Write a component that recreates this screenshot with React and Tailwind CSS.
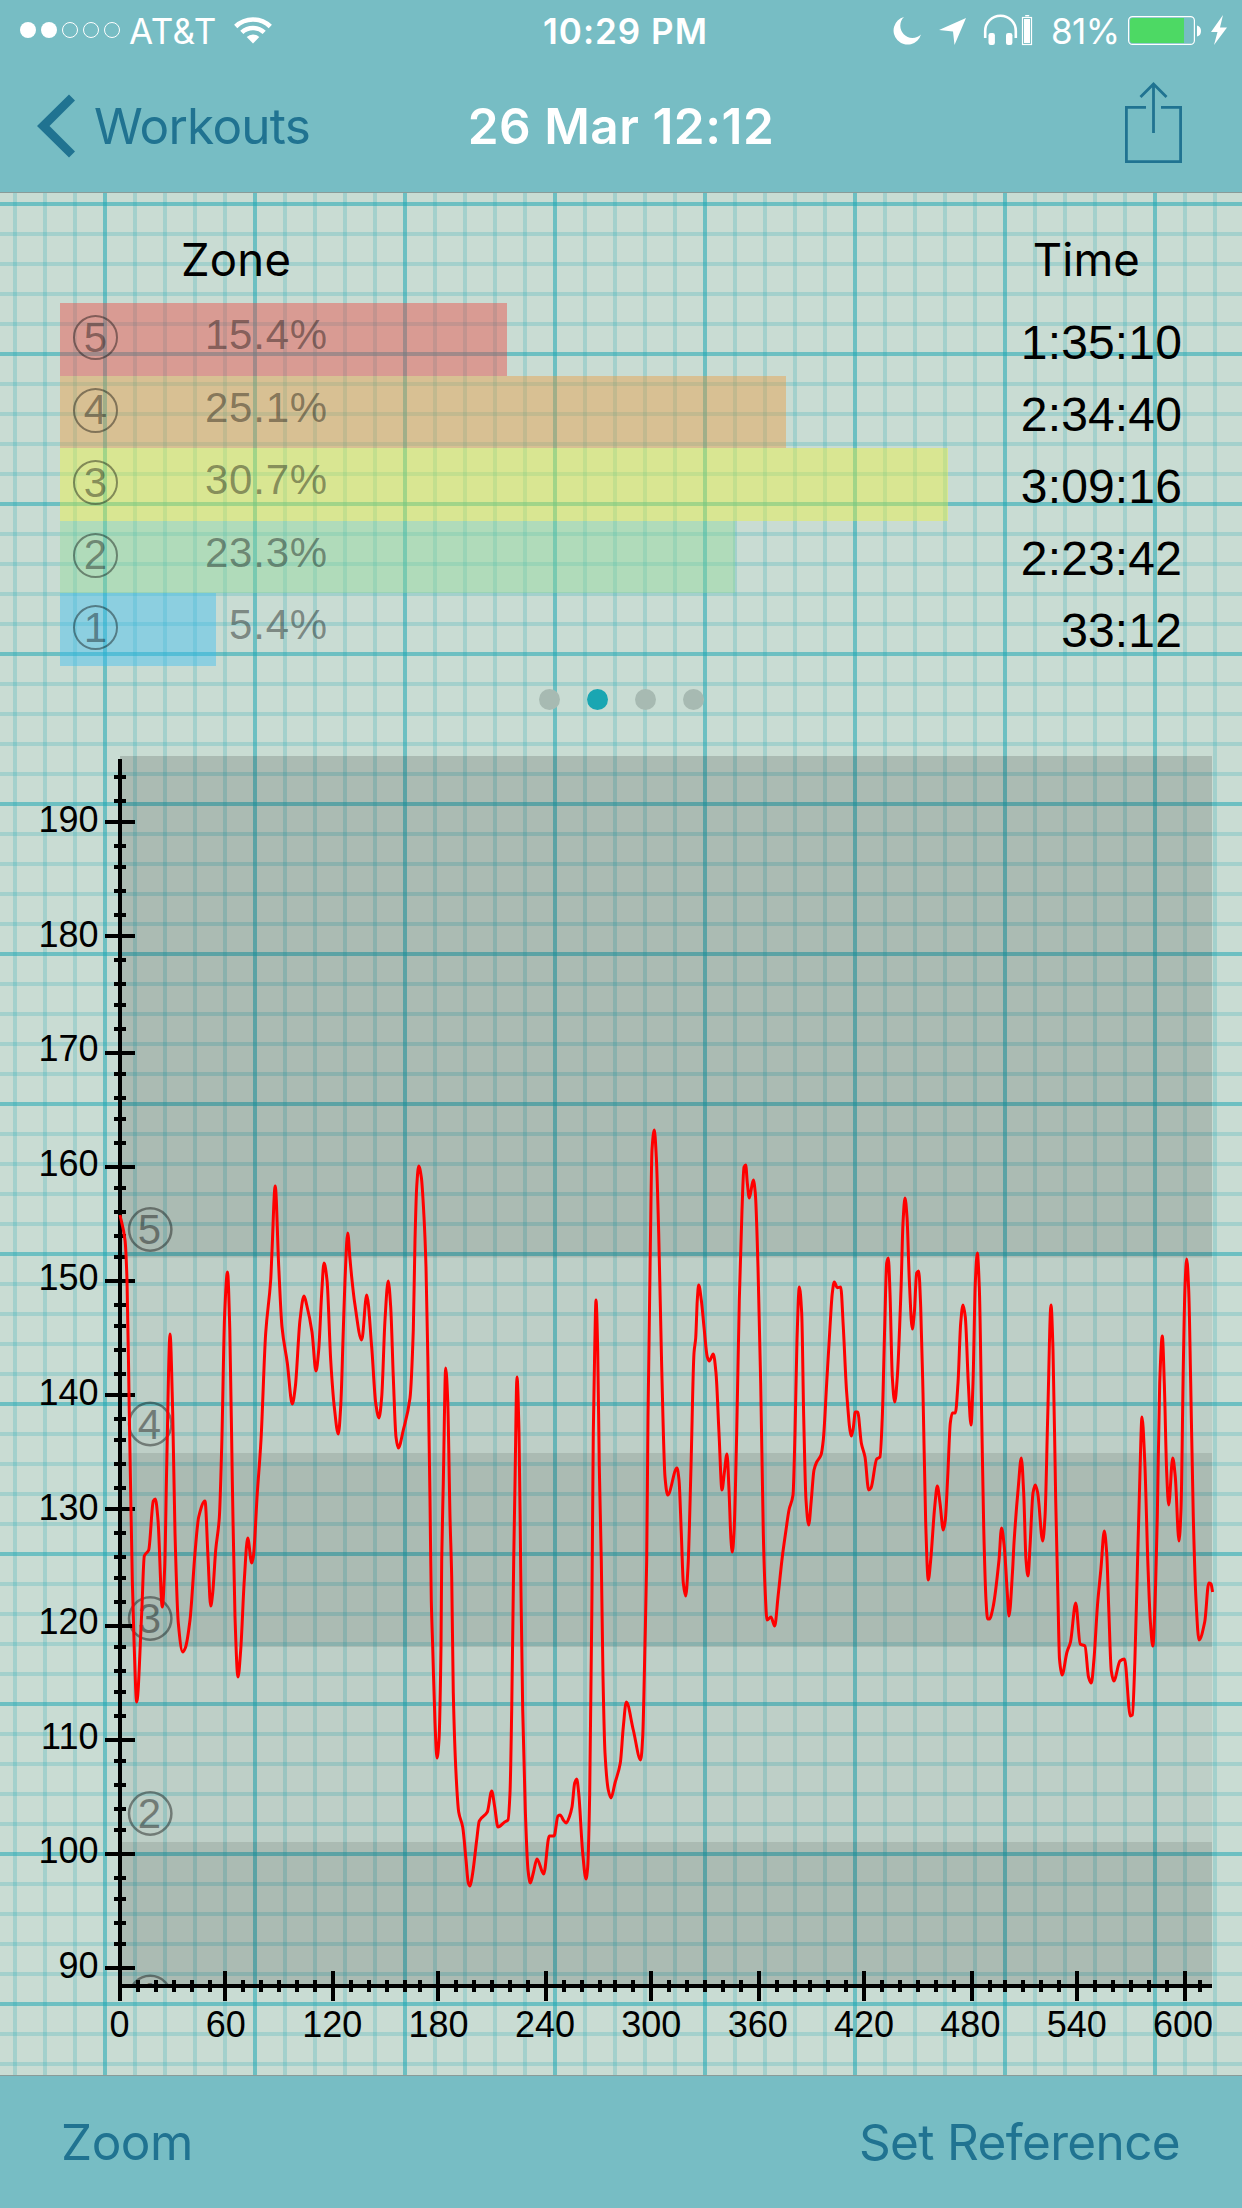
import React from 'react';

const zones = [
    { id: 5, percent: '15.4%', width: 'w-[446.5px]', color: 'bg-[rgba(243,57,53,0.4)]', time: '1:35:10' },
    { id: 4, percent: '25.1%', width: 'w-[726px]', color: 'bg-[rgba(241,150,53,0.4)]', time: '2:34:40' },
    { id: 3, percent: '30.7%', width: 'w-[888px]', color: 'bg-[rgba(243,245,49,0.4)]', time: '3:09:16' },
    { id: 2, percent: '23.3%', width: 'w-[675px]', color: 'bg-[rgba(141,218,151,0.4)]', time: '2:23:42' },
    { id: 1, percent: '5.4%', width: 'w-[156px]', color: 'bg-[rgba(51,187,246,0.4)]', time: '33:12' },
];

// heart rate trace, chart coordinates
const trace = [
    [120, 1215], [125, 1240], [127, 1280], [129.3, 1413], [132.3, 1580], [134, 1640], [136.7, 1702], [141.7, 1613],
    [144.3, 1556], [148.7, 1550], [153.3, 1501], [155.3, 1499], [158, 1520], [162.3, 1607], [164.7, 1567], [166.7, 1467],
    [170, 1334], [172.7, 1413], [175, 1533], [178.3, 1623], [182.7, 1652], [185.3, 1648], [190, 1620], [195, 1553],
    [198.7, 1517], [205, 1501], [208, 1557], [210.7, 1606], [212.7, 1593], [215.7, 1550], [219.3, 1518], [221.7, 1447],
    [224.7, 1313], [227.5, 1272], [229.8, 1330], [232.3, 1480], [235, 1617], [238, 1677], [240.7, 1650], [244.3, 1580],
    [247.7, 1538], [251.7, 1563], [253.3, 1557], [257.3, 1493], [261, 1440], [265.7, 1333], [270.7, 1280], [272, 1251],
    [275.2, 1186], [278.7, 1266], [282, 1327], [287.3, 1363], [292.3, 1404], [295.3, 1387], [300, 1320], [304, 1296],
    [306.7, 1305], [312, 1332], [316, 1371], [318.7, 1350], [321.7, 1293], [324, 1263], [327, 1280], [330.7, 1360],
    [334.3, 1407], [338.3, 1434], [340.7, 1407], [343.3, 1330], [345, 1280], [347.7, 1233], [350, 1259], [352, 1280],
    [354.7, 1303], [361.7, 1340], [366.7, 1295], [371.7, 1347], [375.7, 1403], [379, 1418], [381.7, 1397], [385, 1320],
    [388.2, 1281], [390.7, 1307], [393.3, 1377], [396, 1437], [398.3, 1448], [403.3, 1430], [410, 1398], [413.3, 1330],
    [415, 1240], [416.7, 1187], [418.7, 1166], [421.3, 1177], [424, 1217], [426, 1267], [428, 1367], [430, 1500],
    [431.3, 1600], [432.7, 1647], [435, 1723], [437, 1758], [439, 1740], [441, 1647], [441.7, 1560], [443.3, 1483],
    [445.7, 1368], [447.7, 1400], [450, 1517], [451.7, 1577], [453.3, 1693], [456, 1773], [458.7, 1812], [462.7, 1827],
    [466, 1860], [468.3, 1883], [470, 1886], [472.7, 1873], [476.7, 1840], [479.3, 1821], [487.3, 1812], [491.7, 1791],
    [494.7, 1807], [498, 1827], [504.7, 1822], [508, 1820], [510, 1793], [511.7, 1710], [513.7, 1560], [515, 1483],
    [517, 1377], [519, 1433], [520.7, 1567], [522.7, 1710], [525.3, 1810], [528, 1870], [530.3, 1883], [533.3, 1873],
    [537, 1859], [543.7, 1874], [549.3, 1836], [554, 1836], [558, 1816], [560.3, 1815], [563.3, 1820], [566.3, 1823],
    [569.3, 1817], [572, 1807], [574.7, 1783], [576.7, 1779], [578.7, 1793], [582.7, 1853], [586, 1879], [587.7, 1867],
    [589.7, 1793], [592, 1593], [593.3, 1433], [594.7, 1350], [596, 1300], [597.7, 1350], [599.3, 1467], [601.3, 1560],
    [603, 1677], [605, 1753], [608.3, 1790], [611, 1798], [615, 1783], [620.3, 1763], [623.3, 1727], [626.3, 1702],
    [633.3, 1730], [640.7, 1760], [642.7, 1737], [645, 1643], [646.7, 1560], [648, 1417], [650.3, 1250], [652, 1150],
    [654.3, 1130], [656.3, 1157], [658.7, 1233], [661.7, 1367], [665, 1477], [667.7, 1495], [677, 1468], [679, 1480],
    [681.3, 1533], [683.3, 1583], [685.7, 1596], [688, 1567], [691, 1467], [694, 1353], [695.7, 1338], [697.3, 1300],
    [698.7, 1285], [701.3, 1300], [704, 1327], [707.3, 1357], [709.3, 1361], [713.3, 1354], [716, 1373], [719, 1433],
    [722, 1490], [724.3, 1473], [727, 1454], [729, 1490], [731, 1540], [732.3, 1552], [734, 1533], [736.7, 1433],
    [739.3, 1300], [742, 1210], [744, 1167], [745.7, 1165], [747.3, 1183], [749.3, 1198], [753.3, 1180], [755.3, 1193],
    [758, 1267], [760.7, 1383], [763.3, 1533], [765, 1587], [767, 1620], [771, 1617], [774.7, 1626], [778, 1597],
    [782.3, 1557], [786, 1530], [789, 1510], [793, 1495], [795, 1433], [797, 1340], [799.3, 1287], [801.7, 1313],
    [803.7, 1417], [806, 1500], [808.7, 1525], [811.3, 1500], [814, 1470], [816.7, 1462], [821, 1455], [823.3, 1440],
    [826.7, 1383], [830, 1327], [832.3, 1293], [834.3, 1282], [837.3, 1287.7], [840.7, 1287], [843.3, 1327], [846.7, 1393],
    [851.3, 1436], [853.3, 1428], [855.3, 1412], [857.7, 1412], [861.3, 1443], [865, 1457], [868.7, 1490], [871, 1488],
    [876.7, 1459], [880, 1457], [882.3, 1417], [884.7, 1327], [886.7, 1263], [888.3, 1258], [890, 1293], [892.3, 1377],
    [894.7, 1402], [897.3, 1377], [901, 1290], [903, 1223], [905, 1198], [907, 1217], [909.3, 1280], [912.3, 1329],
    [914.3, 1313], [916.7, 1273], [918.7, 1271], [920.7, 1307], [923, 1393], [925.7, 1523], [928.3, 1580], [930.7, 1560],
    [934.7, 1507], [937.3, 1486], [940, 1503], [943.3, 1530], [945.3, 1520], [947.7, 1477], [950.3, 1423], [952.3, 1413],
    [955.3, 1413], [958, 1383], [960.7, 1323], [963, 1305], [965.3, 1317], [968.3, 1383], [971, 1425], [973, 1383],
    [975.3, 1283], [977.3, 1253], [979.3, 1287], [981.7, 1417], [983.7, 1527], [986, 1600], [987.6, 1619], [989.5, 1619],
    [993, 1607.5], [999, 1560], [1001.5, 1528], [1004.3, 1547], [1007.3, 1593], [1009, 1616], [1012.5, 1572], [1014, 1543],
    [1018.3, 1487], [1021.3, 1458], [1023.7, 1493], [1026, 1560], [1028, 1576], [1030, 1547], [1033, 1493], [1035.3, 1485],
    [1037.7, 1493], [1042.7, 1541], [1045, 1517], [1047.7, 1417], [1051, 1305], [1053, 1350], [1055.7, 1500], [1058, 1600],
    [1059.5, 1659], [1062, 1675], [1067, 1652], [1070.5, 1642], [1075.7, 1603], [1080.2, 1644], [1085, 1646], [1088.5, 1677],
    [1091.3, 1683], [1094, 1659], [1097.5, 1605], [1101, 1568], [1104.3, 1531], [1106.7, 1553], [1108.7, 1607], [1111.3, 1671],
    [1113.8, 1681], [1120, 1661], [1124.5, 1659], [1130.3, 1716], [1132.4, 1715], [1134.8, 1663], [1137.6, 1560], [1139.7, 1483],
    [1142, 1417], [1144.7, 1460], [1148, 1567], [1150.4, 1622], [1152.8, 1646], [1155.6, 1585], [1157.3, 1517], [1159.7, 1383],
    [1162.3, 1336], [1164.3, 1383], [1166.7, 1473], [1168.7, 1505], [1172.7, 1458], [1175.3, 1477], [1179, 1541], [1181, 1510],
    [1183.3, 1367], [1185, 1287], [1186.7, 1259], [1188.7, 1290], [1190.7, 1383], [1193.3, 1517], [1196, 1600], [1199, 1640],
    [1204.7, 1622], [1208.8, 1583], [1211, 1584], [1212.6, 1592],
];

// monotone cubic so the peaks never overshoot
const smoothPath = (pts) => {
    const n = pts.length;
    const slope = [];
    for (let i = 0; i < n - 1; i++) {
        slope.push((pts[i + 1][1] - pts[i][1]) / (pts[i + 1][0] - pts[i][0]));
    }
    const tangent = pts.map((_, i) => {
        if (i === 0) return slope[0];
        if (i === n - 1) return slope[n - 2];
        const a = slope[i - 1];
        const b = slope[i];
        return a * b <= 0 ? 0 : (2 * a * b) / (a + b);
    });
    let d = `M${pts[0][0]} ${pts[0][1]}`;
    for (let i = 0; i < n - 1; i++) {
        const [x0, y0] = pts[i];
        const [x1, y1] = pts[i + 1];
        const h = (x1 - x0) / 3;
        d += `C${(x0 + h).toFixed(2)} ${(y0 + tangent[i] * h).toFixed(2)} ${(x1 - h).toFixed(2)} ${(y1 - tangent[i + 1] * h).toFixed(2)} ${x1} ${y1}`;
    }
    return d;
};

// ticks sit on whole points, labels do not
const snap = (v) => Math.round(v / 3) * 3;
const bpmToY = (bpm) => 822.6 + (190 - bpm) * 11.457;
const minToX = (min) => 120 + min * 1.7727;

const bpmTicks = Array.from({ length: 53 }, (_, i) => 90 + i * 2);
const minTicks = Array.from({ length: 62 }, (_, i) => i * 10);

const bands = [
    { y: 756, h: 501.5, o: 0.15 },
    { y: 1257.5, h: 195.5, o: 0.055 },
    { y: 1453, h: 194, o: 0.15 },
    { y: 1647, h: 195, o: 0.055 },
    { y: 1842, h: 146, o: 0.15 },
];

const zoneMarks = [
    { id: 5, y: 1229.5 },
    { id: 4, y: 1424 },
    { id: 3, y: 1618.5 },
    { id: 2, y: 1813.5 },
    { id: 1, y: 1997 },
];

const StatusBar = () => (
    <div className="flex h-[60px] items-center pl-5 text-white">
        <div className="flex w-[523px] items-center">
            <div className="flex gap-[5px]">
                <span className="size-4 rounded-full bg-white" />
                <span className="size-4 rounded-full bg-white" />
                <span className="size-4 rounded-full border border-white" />
                <span className="size-4 rounded-full border border-white" />
                <span className="size-4 rounded-full border border-white" />
            </div>
            <span className="ml-[9px] w-[87px] whitespace-nowrap pt-[2px] text-[35px] leading-[60px] tracking-[0.5px]">AT&amp;T</span>
            <svg className="ml-[18px] h-[28px] w-[38px]" viewBox="0 0 38 28" fill="none" stroke="#fff">
                <path d="M1.7 10.5 A25 25 0 0 1 36.3 10.5" strokeWidth="4.6" />
                <path d="M7.8 16.4 A16.5 16.5 0 0 1 30.2 16.4" strokeWidth="4.6" />
                <path d="M12.7 21 A9 9 0 0 1 25.3 21 L19 27.5Z" fill="#fff" stroke="none" />
            </svg>
        </div>
        <span className="w-[350px] whitespace-nowrap pt-[2px] text-[35px] leading-[60px] font-semibold tracking-[1px]">10:29 PM</span>
        <svg className="h-[60px] w-[142px] shrink-0" viewBox="893 0 142 60" fill="#fff">
            <path d="M904 17 A14 14 0 1 0 921 34.5 A12 12 0 0 1 904 17Z" />
            <path d="M966 18 L954.5 45 L953 31.5 L939 30Z" />
            <path d="M985.2 38 V31 A15.3 15.3 0 0 1 1015.8 31 V38" fill="none" stroke="#fff" strokeWidth="2.6" />
            <rect x="988.5" y="33" width="6.4" height="12" rx="2.2" />
            <rect x="1006" y="33" width="6.4" height="12" rx="2.2" />
            <rect x="1025.2" y="15" width="4" height="1.4" />
            <rect x="1022.5" y="17.5" width="9" height="27" fill="none" stroke="#fff" strokeWidth="1.2" />
            <rect x="1024" y="19" width="6" height="24" />
        </svg>
        <span className="ml-[16px] w-[77px] whitespace-nowrap pt-[2px] text-[35px] leading-[60px] tracking-[-0.6px]">81%</span>
        <svg className="h-[60px] w-[102px] shrink-0" viewBox="1128 0 102 60" fill="#fff">
            <rect x="1128.6" y="16.6" width="65.8" height="27.8" rx="4" fill="none" stroke="#fff" strokeWidth="1.2" />
            <path d="M1184 18 V43 H1133 Q1130 43 1130 40 V21 Q1130 18 1133 18Z" fill="#4dd964" />
            <path d="M1197 25.5 Q1201 26.5 1201 31 Q1201 35.5 1197 36.5Z" />
            <path d="M1223 15 L1211 32 H1217.5 L1214 45 L1227 27.5 H1220Z" />
        </svg>
    </div>
);

const NavBar = () => (
    <div className="grid h-[132px] grid-cols-[1fr_auto_1fr] items-center text-[49.5px] leading-[132px]">
        <div className="flex items-center pl-[37px] text-[#207391]">
            <svg className="h-[64px] w-[38px]" viewBox="37 94.5 38 64" fill="#207391">
                <path d="M69 95 L75 101 L49.5 126.5 L75 152 L69 158 L37 126.5Z" />
            </svg>
            <span className="ml-[19px] tracking-[-0.75px]">Workouts</span>
        </div>
        <h1 className="font-semibold text-white tracking-[0.5px]">26 Mar 12:12</h1>
        <div className="flex justify-end pr-[59px]">
            <svg className="h-[132px] w-[60px]" viewBox="1123 60 60 132" fill="none" stroke="#207391" strokeWidth="2.8">
                <path d="M1146 107.4 H1126.4 V161.6 H1180.6 V107.4 H1161" />
                <path d="M1153.5 133 V84 M1140.5 97 L1153.5 84 L1166.5 97" />
            </svg>
        </div>
    </div>
);

const ZoneSummary = () => (
    <section>
        <div className="flex h-[110px] justify-between pt-[27px] pr-[102px] pl-[181px] text-[45.5px] leading-[80px]">
            <span className="tracking-[0.2px]">Zone</span>
            <span className="tracking-[0.1px]">Time</span>
        </div>
        <div className="flex h-[363px] justify-between pr-[60px] pl-[60px] font-['Liberation_Sans',Arial,sans-serif]">
            <div className="flex flex-col">
                {zones.map((zone) => (
                    <div key={zone.id} className="grid h-[72.6px]">
                        <div className={`col-start-1 row-start-1 h-[72.6px] ${zone.width} ${zone.color}`} />
                        <div className="col-start-1 row-start-1 flex items-start text-[42px] text-black/40">
                            <span className="mt-3 ml-[13px] flex size-[45px] items-center justify-center rounded-full border-[2.5px] border-black/40 leading-none">
                                {zone.id}
                            </span>
                            <span className="w-[210px] text-right leading-[63px] tracking-[0.8px]">{zone.percent}</span>
                        </div>
                    </div>
                ))}
            </div>
            <div className="flex flex-col pt-1 text-right text-[48px] leading-[72px] tracking-[0.15px]">
                {zones.map((zone) => (
                    <span key={zone.id}>{zone.time}</span>
                ))}
            </div>
        </div>
        <div className="flex h-[78px] justify-center gap-[27px] pt-[23px]">
            <span className="size-[21px] rounded-full bg-[#a7bab2]" />
            <span className="size-[21px] rounded-full bg-[#1aa6b2]" />
            <span className="size-[21px] rounded-full bg-[#a7bab2]" />
            <span className="size-[21px] rounded-full bg-[#a7bab2]" />
        </div>
    </section>
);

const HeartRateChart = () => (
    <svg
        className="block h-[1331px] w-[1242px] font-['Liberation_Sans',Arial,sans-serif]"
        viewBox="0 744 1242 1331"
    >
        <clipPath id="plot">
            <rect x="118" y="756" width="1096" height="1232" />
        </clipPath>
        {bands.map((band) => (
            <rect key={band.y} x="120" y={band.y} width="1092" height={band.h} fill="#000" fillOpacity={band.o} />
        ))}
        <g clipPath="url(#plot)" opacity="0.4" fontSize="42" textAnchor="middle">
            {zoneMarks.map((mark) => (
                <g key={mark.id}>
                    <circle cx="150.2" cy={mark.y} r="21.2" fill="none" stroke="#000" strokeWidth="2.5" />
                    <text x="149.5" y={mark.y + 14.6}>{mark.id}</text>
                </g>
            ))}
        </g>
        <g stroke="#000" strokeWidth="4">
            <path d="M120 759 V2001 M118 1986 H1212" />
            {bpmTicks.map((bpm) => {
                const half = bpm % 10 === 0 ? 15 : 6;
                return <path key={bpm} d={`M${120 - half} ${snap(bpmToY(bpm))} h${half * 2}`} />;
            })}
            {minTicks.slice(1).map((min) => {
                const half = min % 60 === 0 ? 15 : 6;
                return <path key={min} d={`M${snap(minToX(min))} ${1986 - half} v${half * 2}`} />;
            })}
        </g>
        <g fontSize="36" textAnchor="end">
            {bpmTicks.filter((bpm) => bpm % 10 === 0).map((bpm) => (
                <text key={bpm} x="98.5" y={bpmToY(bpm) + 9.6}>{bpm}</text>
            ))}
        </g>
        <g fontSize="36" textAnchor="middle">
            {minTicks.filter((min) => min % 60 === 0).map((min) => (
                <text key={min} x={minToX(min) - 0.5} y="2037">{min}</text>
            ))}
        </g>
        <path d={smoothPath(trace)} fill="none" stroke="#f00" strokeWidth="3" strokeLinejoin="round" />
    </svg>
);

const App = () => {
    return (
        <div className="flex h-[2208px] w-[1242px] flex-col overflow-hidden bg-[#c9dcd3] bg-[linear-gradient(to_right,rgba(26,166,179,0.4)_4px,transparent_4px),linear-gradient(to_bottom,rgba(26,166,179,0.4)_4px,transparent_4px),linear-gradient(to_right,rgba(26,166,179,0.21)_4px,transparent_4px),linear-gradient(to_bottom,rgba(26,166,179,0.21)_4px,transparent_4px)] [background-position:103px_202px,103px_202px,13px_22px,13px_22px] [background-size:150px_150px,150px_150px,30px_30px,30px_30px] font-[Inter,sans-serif] text-black">
            <header className="h-[193px] shrink-0 border-b border-[#8a9b98] bg-[#77bdc4]">
                <StatusBar />
                <NavBar />
            </header>
            <main className="h-[1882px] shrink-0">
                <ZoneSummary />
                <HeartRateChart />
            </main>
            <footer className="flex h-[133px] shrink-0 items-center justify-between border-t border-[#8a9b98] bg-[#77bdc4] pr-[62px] pl-[61px] text-[49.5px] text-[#207391]">
                <span className="tracking-[-0.5px]">Zoom</span>
                <span className="tracking-[-0.65px]">Set Reference</span>
            </footer>
        </div>
    );
};

export default App;
